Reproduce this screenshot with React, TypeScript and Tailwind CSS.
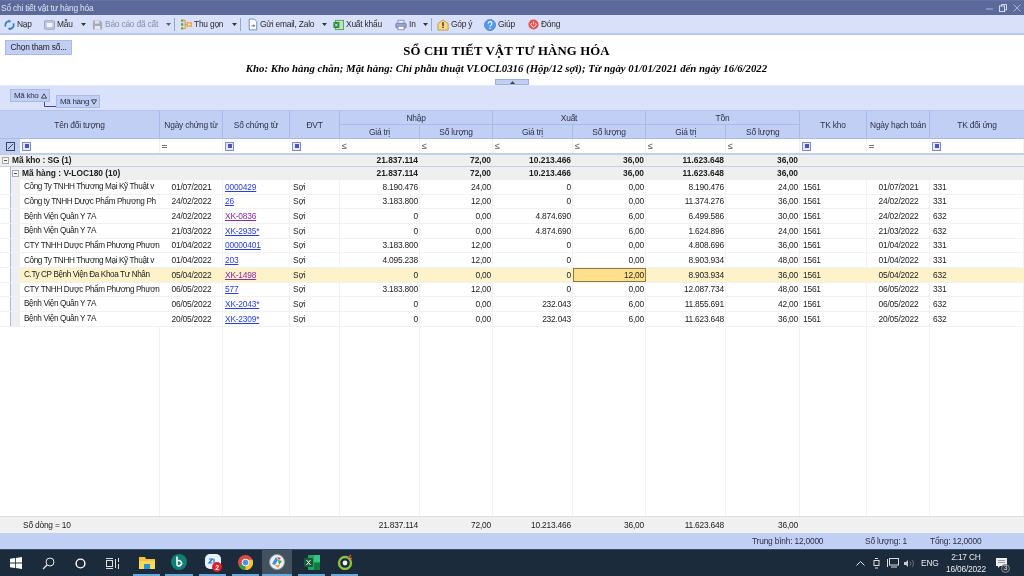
import React from "react";

const GRID = "grid grid-cols-[160px_63px_67px_50px_80px_73px_80px_73px_80px_74px_67px_63px_94px]";

type Row = { n: string; d: string; s: string; v: boolean; a: string[]; tk: string; dh: string; du: string; sel?: boolean };

const rows: Row[] = [
  { n: "Công Ty TNHH Thương Mại Kỹ Thuật v", d: "01/07/2021", s: "0000429", v: false, a: ["8.190.476", "24,00", "0", "0,00", "8.190.476", "24,00"], tk: "1561", dh: "01/07/2021", du: "331" },
  { n: "Công ty TNHH Dược Phẩm Phương Ph", d: "24/02/2022", s: "26", v: false, a: ["3.183.800", "12,00", "0", "0,00", "11.374.276", "36,00"], tk: "1561", dh: "24/02/2022", du: "331" },
  { n: "Bệnh Viện Quân Y 7A", d: "24/02/2022", s: "XK-0836", v: true, a: ["0", "0,00", "4.874.690", "6,00", "6.499.586", "30,00"], tk: "1561", dh: "24/02/2022", du: "632" },
  { n: "Bệnh Viện Quân Y 7A", d: "21/03/2022", s: "XK-2935*", v: false, a: ["0", "0,00", "4.874.690", "6,00", "1.624.896", "24,00"], tk: "1561", dh: "21/03/2022", du: "632" },
  { n: "CTY TNHH Dược Phẩm Phương Phươn", d: "01/04/2022", s: "00000401", v: false, a: ["3.183.800", "12,00", "0", "0,00", "4.808.696", "36,00"], tk: "1561", dh: "01/04/2022", du: "331" },
  { n: "Công Ty TNHH Thương Mại Kỹ Thuật v", d: "01/04/2022", s: "203", v: false, a: ["4.095.238", "12,00", "0", "0,00", "8.903.934", "48,00"], tk: "1561", dh: "01/04/2022", du: "331" },
  { n: "C.Ty CP Bệnh Viện Đa Khoa Tư Nhân", d: "05/04/2022", s: "XK-1498", v: true, a: ["0", "0,00", "0", "12,00", "8.903.934", "36,00"], tk: "1561", dh: "05/04/2022", du: "632", sel: true },
  { n: "CTY TNHH Dược Phẩm Phương Phươn", d: "06/05/2022", s: "577", v: false, a: ["3.183.800", "12,00", "0", "0,00", "12.087.734", "48,00"], tk: "1561", dh: "06/05/2022", du: "331" },
  { n: "Bệnh Viện Quân Y 7A", d: "06/05/2022", s: "XK-2043*", v: false, a: ["0", "0,00", "232.043", "6,00", "11.855.691", "42,00"], tk: "1561", dh: "06/05/2022", du: "632" },
  { n: "Bệnh Viện Quân Y 7A", d: "20/05/2022", s: "XK-2309*", v: false, a: ["0", "0,00", "232.043", "6,00", "11.623.648", "36,00"], tk: "1561", dh: "20/05/2022", du: "632" },
];

const totals = ["21.837.114", "72,00", "10.213.466", "36,00", "11.623.648", "36,00"];

const Caret = ({ dim }: { dim?: boolean }) => (
  <svg width="5" height="4" viewBox="0 0 5 4" className="ml-auto mr-[1px]"><path d="M0 0h5L2.5 3z" fill={dim ? "#5a5f78" : "#333"} /></svg>
);
const Sep = () => <div className="w-px h-[13px] bg-[#8fa6d8] shrink-0" />;

const NapIcon = () => (
  <svg width="11" height="12" viewBox="0 0 13 13" fill="none"><path d="M2 8.5A4.8 4.8 0 0 1 6 1.8" stroke="#2f7fd8" strokeWidth="2" /><path d="M11 4.5A4.8 4.8 0 0 1 7 11.2" stroke="#2f7fd8" strokeWidth="2" /><path d="M5.5 0v4l3-2zM7.5 9v4l-3-2z" fill="#2f7fd8" /></svg>
);
const MauIcon = () => (
  <svg width="11" height="12" viewBox="0 0 13 13"><rect x=".5" y="1.5" width="12" height="10" rx="1.5" fill="#c9d3ef" stroke="#8f97b8" /><rect x="2.5" y="3.5" width="8" height="6" fill="#f4f6fc" stroke="#b5bcd4" /></svg>
);
const SaveIcon = () => (
  <svg width="11" height="12" viewBox="0 0 12 12"><path d="M1 1h8l2 2v8H1z" fill="#a5a9b5" /><rect x="3" y="1.5" width="5" height="3" fill="#dfe2ea" /><rect x="3" y="7" width="6" height="4" fill="#e6e8ee" /></svg>
);
const ThuIcon = () => (
  <svg width="11" height="13" viewBox="0 0 12 13"><rect x="0" y="1" width="2.5" height="2.5" fill="#6bae2f" /><rect x="0" y="5" width="2.5" height="3" fill="#6bae2f" /><rect x="0" y="9.5" width="2.5" height="2.5" fill="#6bae2f" /><path d="M2.5 2h2v9h-2M4.5 6.5h2" stroke="#e08a2a" fill="none" /><rect x="6" y="4" width="6" height="5" fill="#f0a040" /><rect x="7.5" y="5.5" width="3" height="2" fill="#fff3d8" /></svg>
);
const MailIcon = () => (
  <svg width="10" height="13" viewBox="0 0 12 14"><path d="M1.5.5h6l3 3v10h-9z" fill="#fff" stroke="#5b78b8" /><path d="M4 8.5h4M6.5 7l1.5 1.5L6.5 10" stroke="#3f5fa8" fill="none" /></svg>
);
const ExcelIcon = () => (
  <svg width="11" height="12" viewBox="0 0 13 13"><rect x="3" y="1" width="9.5" height="11" fill="#bfe2bd" stroke="#4d9d4a" /><rect x="0.5" y="3" width="7" height="7" fill="#1f8a3d" /><path d="M2.3 4.8l3.2 3.4M5.5 4.8L2.3 8.2" stroke="#fff" /></svg>
);
const PrintIcon = () => (
  <svg width="12" height="12" viewBox="0 0 14 13"><rect x="3.5" y="1" width="7" height="4" fill="#eef1fa" stroke="#7c8bb5" /><rect x="1" y="4.5" width="12" height="5.5" rx="1" fill="#98a7cf" stroke="#7180ad" /><rect x="3.5" y="8" width="7" height="4" fill="#fff" stroke="#7c8bb5" /></svg>
);
const GopIcon = () => (
  <svg width="12" height="12" viewBox="0 0 13 13"><path d="M1 5l5.5-4L12 5v7H1z" fill="#f6d98a" stroke="#b89a45" /><rect x="5.6" y="3.5" width="1.8" height="4" fill="#5a4412" /><rect x="5.6" y="8.3" width="1.8" height="1.4" fill="#5a4412" /></svg>
);
const HelpIcon = () => (
  <svg width="12" height="12" viewBox="0 0 13 13"><circle cx="6.5" cy="6.5" r="6" fill="#4f9be8" stroke="#6a86c8" /><path d="M4.6 5a2 2 0 1 1 2.8 1.7c-.7.4-.9.7-.9 1.4" stroke="#fff" strokeWidth="1.2" fill="none" /><circle cx="6.5" cy="10" r=".8" fill="#fff" /></svg>
);
const CloseIcon = () => (
  <svg width="11" height="11" viewBox="0 0 13 13"><circle cx="6.5" cy="6.5" r="6" fill="#e8504f" /><path d="M4.3 4.5a3 3 0 1 0 4.4 0" stroke="#fff" fill="none" /><path d="M6.5 3v3.5" stroke="#fff" /></svg>
);
const Square = () => <span className="block w-[9px] h-[9px] border border-[#7f8cc4] bg-[#e4e8fa] p-[1.5px]"><span className="block w-full h-full bg-[#4a55c0]" /></span>;
const Le = () => <span className="text-[9px] leading-none text-[#555]">≤</span>;
const Eq = () => <span className="block w-[5px] h-[3px] border-y border-[#777]" />;
const Minus = () => (
  <svg width="7" height="7" viewBox="0 0 7 7" className="mr-[3px] shrink-0" fill="none"><rect x=".5" y=".5" width="6" height="6" fill="#f6f6f6" stroke="#aaa" /><path d="M2 3.5h3" stroke="#555" /></svg>
);

const Tool = ({ icon, label, dim, caret, cls }: { icon: React.ReactNode; label: string; dim?: boolean; caret?: boolean; cls: string }) => (
  <div className={"flex items-center shrink-0 whitespace-nowrap " + cls}>
    {icon}
    <span className={"ml-[2px] " + (dim ? "text-[#8a8ea4]" : "text-[#2a2a2a]")}>{label}</span>
    {caret && <Caret dim={dim} />}
  </div>
);

const HCell = ({ children, cls }: { children?: React.ReactNode; cls?: string }) => (
  <div className={"flex items-center justify-center pt-[1px] border-r border-[#a9b9ea] text-[#2c3048] " + (cls ?? "")}>{children}</div>
);

const App = () => (
  <div className="w-[1024px] h-[576px] overflow-hidden flex flex-col bg-white text-[8.4px] tracking-[-0.2px] leading-none text-[#222] font-['Liberation_Sans',sans-serif] blur-[0.25px]">
    <div className="h-[15px] shrink-0 bg-[#5b6a9a] border-t border-[#6473a3] flex items-center justify-between pl-[1px] pr-[3px] text-[#dfe4f2]">
      <span>Sổ chi tiết vật tư hàng hóa</span>
      <div className="flex items-center gap-[6px]">
        <svg width="7" height="7" viewBox="0 0 7 7"><path d="M0 4h7" stroke="#aeb7d4" /></svg>
        <svg width="8" height="8" viewBox="0 0 8 8" fill="none"><rect x=".5" y="2" width="5" height="5.5" stroke="#d5daea" /><path d="M2.5 2V.5h5V6H6" stroke="#d5daea" /></svg>
        <svg width="8" height="8" viewBox="0 0 8 8"><path d="M.5.5l7 7M7.5.5l-7 7" stroke="#aeb7d4" /></svg>
      </div>
    </div>
    <div className="h-[20px] shrink-0 pt-[1px] bg-[#d8e0fa] border-b-2 border-[#bac8f0] flex items-center pl-[4px]">
      <Tool icon={<NapIcon />} label="Nạp" cls="w-[40px]" />
      <Tool icon={<MauIcon />} label="Mẫu" caret cls="w-[43px] mr-[5px]" />
      <Tool icon={<SaveIcon />} label="Báo cáo đã cất" dim caret cls="w-[80px] mr-[2px]" />
      <Sep />
      <div className="w-[6px] shrink-0" />
      <Tool icon={<ThuIcon />} label="Thu gọn" caret cls="w-[57px] mr-[2px]" />
      <Sep />
      <div className="w-[7px] shrink-0" />
      <Tool icon={<MailIcon />} label="Gửi email, Zalo" caret cls="w-[80px] mr-[5px]" />
      <Tool icon={<ExcelIcon />} label="Xuất khẩu" cls="w-[62px]" />
      <Tool icon={<PrintIcon />} label="In" caret cls="w-[34px] mr-[2px]" />
      <Sep />
      <div className="w-[5px] shrink-0" />
      <Tool icon={<GopIcon />} label="Góp ý" cls="w-[47px]" />
      <Tool icon={<HelpIcon />} label="Giúp" cls="w-[44px]" />
      <Tool icon={<CloseIcon />} label="Đóng" cls="w-[40px]" />
    </div>
    <div className="h-[50px] shrink-0 relative bg-white flex flex-col items-center pr-[11px] font-['Liberation_Serif',serif] text-black tracking-normal">
      <div className="mt-[9px] text-[12.75px] font-bold leading-[14px] tracking-[0.15px]">SỔ CHI TIẾT VẬT TƯ HÀNG HÓA</div>
      <div className="mt-[4px] text-[10.8px] font-bold italic leading-[12px]">Kho: Kho hàng chẵn; Mặt hàng: Chỉ phẫu thuật VLOCL0316 (Hộp/12 sợi); Từ ngày 01/01/2021 đến ngày 16/6/2022</div>
      <button className="absolute left-[5px] top-[5px] w-[67px] h-[15px] bg-[#c2cff5] border border-[#a9b9ea] text-[8.4px] tracking-[-0.2px] text-[#222] font-['Liberation_Sans',sans-serif] leading-none">Chọn tham số...</button>
      <div className="absolute left-[495px] bottom-0 w-[34px] h-[6px] bg-[#c2cff5] border border-[#9dafe2] flex items-center justify-center">
        <svg width="5" height="3" viewBox="0 0 5 3"><path d="M0 3h5L2.5 0z" fill="#444" /></svg>
      </div>
    </div>
    <div className="h-[26px] shrink-0 relative bg-[#d9e1fb] border-t border-[#e3e9fc] border-b border-b-[#b2c1ee]">
      <div className="absolute left-[10px] top-[3px] w-[40px] h-[13px] bg-[#c2cff5] border border-[#a9b9ea] flex items-center justify-between pl-[3px] pr-[2px] text-[#2c3048] text-[8px] whitespace-nowrap tracking-[-0.3px]">
        <span>Mã kho</span>
        <svg width="6" height="6" viewBox="0 0 7 6" fill="none"><path d="M.5 5.5h6L3.5.5z" stroke="#333" /></svg>
      </div>
      <svg className="absolute left-[44px] top-[16px]" width="13" height="6" viewBox="0 0 13 6" fill="none"><path d="M.5 0v4.5H13" stroke="#4a3fa8" /></svg>
      <div className="absolute left-[56px] top-[9px] w-[44px] h-[13px] bg-[#c2cff5] border border-[#a9b9ea] flex items-center justify-between pl-[3px] pr-[2px] text-[#2c3048] text-[8px] whitespace-nowrap tracking-[-0.3px]">
        <span>Mã hàng</span>
        <svg width="6" height="6" viewBox="0 0 7 6" fill="none"><path d="M.5.5h6L3.5 5.5z" stroke="#333" /></svg>
      </div>
    </div>

    <div className={GRID + " h-[28px] shrink-0 bg-[#c2cff5] border-b border-[#a9b9ea]"}>
      <HCell>Tên đối tượng</HCell>
      <HCell>Ngày chứng từ</HCell>
      <HCell>Số chứng từ</HCell>
      <HCell>ĐVT</HCell>
      {["Nhập", "Xuất", "Tồn"].map((t) => (
        <div key={t} className="col-span-2 grid grid-rows-[14px_1fr]">
          <HCell cls="border-b">{t}</HCell>
          <div className="flex">
            <HCell cls="flex-[80_80_0]">Giá trị</HCell>
            <HCell cls="flex-[73_73_0]">Số lượng</HCell>
          </div>
        </div>
      ))}
      <HCell>TK kho</HCell>
      <HCell>Ngày hạch toán</HCell>
      <HCell cls="border-r-0">TK đối ứng</HCell>
    </div>

    <div className={GRID + " h-[16px] shrink-0 bg-white border-b-2 border-[#c3cfe8]"}>
      <div className="flex items-center border-r border-[#f1f2f6]">
        <div className="w-[20px] h-full bg-[#c2cff5] flex items-center justify-center">
          <svg width="9" height="9" viewBox="0 0 9 9" fill="none"><rect x=".5" y=".5" width="8" height="8" stroke="#3c4468" /><path d="M2 7l5-5" stroke="#3c4468" /></svg>
        </div>
        <div className="ml-[2px]"><Square /></div>
      </div>
      {[<Eq />, <Square />, <Square />, <Le />, <Le />, <Le />, <Le />, <Le />, <Le />, <Square />, <Eq />, <Square />].map((el, i) => (
        <div key={i} className="flex items-center pl-[2px] border-r border-[#f1f2f6]">{el}</div>
      ))}
    </div>

    <div className={GRID + " h-[12px] shrink-0 bg-[#efefef] font-bold tracking-normal text-[#1c1c1c] border-b border-[#c3cfe8]"}>
      <div className="col-span-4 flex items-center pl-[2px] tracking-[-0.1px]">
        <Minus />
        Mã kho : SG (1)
      </div>
      {totals.map((t) => <div key={t + "a"} className="flex items-center justify-end pr-[2px]">{t}</div>)}
    </div>

    <div className="flex-1 min-h-0 flex flex-col">
      <div className="flex-1 min-h-0 relative">
        <div className={GRID + " absolute inset-0"}>
          {Array.from({ length: 13 }).map((_, i) => <div key={i} className="border-r border-[#f1f2f5]" />)}
        </div>
        <div className="relative">
          <div className="flex h-[13px]">
            <div className="w-[10px] shrink-0 bg-white" />
            <div className="flex-1 min-w-0 bg-[#efefef] border-l border-[#a9b9ea] font-bold tracking-normal text-[#1c1c1c] grid grid-cols-[149px_63px_67px_50px_80px_73px_80px_73px_80px_74px_67px_63px_94px]">
              <div className="col-span-4 flex items-center pl-[1px]">
                <Minus />
                Mã hàng : V-LOC180 (10)
              </div>
              {totals.map((t) => <div key={t + "b"} className="flex items-center justify-end pr-[2px]">{t}</div>)}
            </div>
          </div>
          {rows.map((r) => (
            <div key={r.s} className={GRID + " h-[14.67px] border-b border-[#f0f1f4] " + (r.sel ? "bg-[#fdf2c9]" : "")}>
              <div className="flex items-center h-full bg-white">
                <div className="w-[11px] h-full self-stretch border-r border-[#a9b9ea] bg-white shrink-0" />
                <div className="w-[9px] h-full bg-[#efefef] shrink-0" />
                <div className={"flex-1 h-full flex items-center pl-[4px] pt-[1px] overflow-hidden whitespace-nowrap text-[8.2px] tracking-[-0.4px] " + (r.sel ? "bg-[#fdf2c9]" : "")}>{r.n}</div>
              </div>
              <div className="flex items-center justify-center">{r.d}</div>
              <div className={"flex items-center pl-[2px] underline " + (r.v ? "text-[#8a2aa0]" : "text-[#2a3fe0]")}>{r.s}</div>
              <div className="flex items-center pl-[3px]">Sợi</div>
              {r.a.map((v, i) => (
                r.sel && i === 3
                  ? <div key={i} className="flex items-center justify-end pr-[1px] bg-[#fedf8c] border border-[#8a7a4a]">{v}</div>
                  : <div key={i} className="flex items-center justify-end pr-[2px]">{v}</div>
              ))}
              <div className="flex items-center pl-[3px]">{r.tk}</div>
              <div className="flex items-center justify-center">{r.dh}</div>
              <div className="flex items-center pl-[3px]">{r.du}</div>
            </div>
          ))}
        </div>
      </div>
      <div className={GRID + " h-[17px] shrink-0 pt-[1px] bg-[#f0f0f0] border-t border-[#e0e0e0]"}>
        <div className="col-span-4 flex items-center pl-[23px]">Số dòng = 10</div>
        {totals.map((t) => <div key={t + "c"} className="flex items-center justify-end pr-[2px]">{t}</div>)}
      </div>
      <div className="h-[16px] shrink-0 pt-[1px] bg-[#c2cff5] flex items-center text-[#2c3048]">
        <span className="ml-[752px] w-[113px]">Trung bình: 12,0000</span>
        <span className="w-[65px]">Số lượng: 1</span>
        <span>Tổng: 12,0000</span>
      </div>
    </div>

    <div className="h-[27px] shrink-0 bg-[#1c2b3c] border-t border-[#31506e] flex items-stretch text-white">
      <div className="w-[32px] flex items-center justify-center">
        <svg width="12" height="12" viewBox="0 0 12 12" fill="#fff"><path d="M0 1.8L5 1v4.6H0zM5.8.9L12 0v5.6H5.8zM0 6.4h5V11l-5-.8zM5.8 6.4H12V12l-6.2-.9z" /></svg>
      </div>
      <div className="w-[32px] flex items-center justify-center">
        <svg width="13" height="13" viewBox="0 0 13 13" fill="none"><circle cx="8" cy="5" r="4" stroke="#e8e8e8" /><path d="M5 8l-4 4" stroke="#e8e8e8" strokeWidth="1.3" /></svg>
      </div>
      <div className="w-[32px] flex items-center justify-center">
        <svg width="11" height="11" viewBox="0 0 11 11" fill="none"><circle cx="5.5" cy="5.5" r="4.4" stroke="#fff" strokeWidth="1.4" /></svg>
      </div>
      <div className="w-[32px] flex items-center justify-center">
        <svg width="13" height="11" viewBox="0 0 13 11" fill="none" stroke="#ddd"><rect x=".5" y="2.5" width="6" height="6" /><path d="M0 .5h7M0 10.5h7M9.5 1v9M12.5 0v4M12.5 6v5" /></svg>
      </div>
      <div className="w-[27px] ml-[5px] flex items-center justify-center border-b-2 border-[#6aa9dc]">
        <svg width="16" height="13" viewBox="0 0 16 13"><path d="M0 1h6l1 2h9v10H0z" fill="#f5c33b" /><rect x="0" y="5" width="16" height="8" fill="#fbd85c" /><rect x="5" y="8" width="6" height="5" fill="#2e8fd6" /></svg>
      </div>
      <div className="w-[28px] ml-[5px] flex items-center justify-center border-b-2 border-[#6aa9dc]">
        <svg width="16" height="16" viewBox="0 0 16 16"><circle cx="8" cy="8" r="8" fill="#0f7f78" /><path d="M6 2.5v9M6 7a3 2.6 0 1 1 0 4.4" stroke="#fff" strokeWidth="1.6" fill="none" /></svg>
      </div>
      <div className="w-[27px] ml-[6px] flex items-center justify-center border-b-2 border-[#6aa9dc] relative">
        <svg width="16" height="16" viewBox="0 0 16 16"><rect width="16" height="15" rx="5" fill="#e8f2fd" /><path d="M4 5h3.5L4 9h3.5M9 5v4" stroke="#1d6fe0" strokeWidth="1.2" fill="none" /></svg>
        <span className="absolute left-[13px] top-[12px] w-[10px] h-[10px] rounded-full bg-[#e2202a] text-[7px] font-bold flex items-center justify-center">2</span>
      </div>
      <div className="w-[27px] ml-[6px] flex items-center justify-center border-b-2 border-[#6aa9dc]">
        <svg width="15" height="15" viewBox="0 0 16 16"><circle cx="8" cy="8" r="8" fill="#dd4b3e" /><path d="M8 8L1 12A8 8 0 0 0 8 16z" fill="#2f9e4f" /><path d="M8 16A8 8 0 0 0 15.5 5H8z" fill="#f6c531" /><circle cx="8" cy="8" r="3.6" fill="#4a8fe8" stroke="#fff" /></svg>
      </div>
      <div className="w-[30px] ml-[3px] flex items-center justify-center bg-[#43525f] border-b-2 border-[#6aa9dc]">
        <svg width="16" height="16" viewBox="0 0 16 16"><circle cx="8" cy="8" r="7.5" fill="#f0f0f0" stroke="#8b9aa5" /><path d="M3 10l4-7 2 3-3 5z" fill="#3f8fe0" /><path d="M9 6l4 1-3 4z" fill="#38a860" /><path d="M6 11h5l-2 3z" fill="#f09a2f" /><path d="M8 3l4 1-2 2z" fill="#d8402f" /></svg>
      </div>
      <div className="w-[27px] ml-[6px] flex items-center justify-center border-b-2 border-[#6aa9dc]">
        <svg width="16" height="15" viewBox="0 0 16 15"><rect x="4" y="0" width="12" height="15" rx="1" fill="#21a366" /><rect x="10" y="0" width="6" height="7.5" fill="#33c481" /><rect x="10" y="7.5" width="6" height="7.5" fill="#107c41" /><rect x="0" y="3" width="9" height="9" rx="1" fill="#185c37" /><path d="M2.5 5l4 5M6.5 5l-4 5" stroke="#fff" /></svg>
      </div>
      <div className="w-[27px] ml-[6px] flex items-center justify-center border-b-2 border-[#6aa9dc]">
        <svg width="16" height="16" viewBox="0 0 16 16" fill="none"><circle cx="8" cy="9" r="6" stroke="#8cc43c" strokeWidth="2.4" /><circle cx="8" cy="9" r="2.4" fill="#f2f2f2" /><path d="M11 4l3-3M13 5l2-1" stroke="#e2553a" strokeWidth="1.4" /></svg>
      </div>
      <div className="flex-1" />
      <div className="flex items-center text-[#e8e8e8]">
        <svg width="9" height="6" viewBox="0 0 9 6" fill="none"><path d="M.5 5.5l4-4 4 4" stroke="#e8e8e8" /></svg>
        <svg width="8" height="11" viewBox="0 0 8 11" fill="none" stroke="#ddd" className="ml-[8px]"><rect x="1" y="2.5" width="5" height="5" /><path d="M2 .5h3M2 10h3" /></svg>
        <svg width="12" height="10" viewBox="0 0 12 10" fill="none" stroke="#ddd" className="ml-[6px]"><rect x="2.5" y=".5" width="9" height="6.5" /><path d="M.5 1v8M4 9h6" /></svg>
        <svg width="10" height="9" viewBox="0 0 10 9" fill="none" className="ml-[5px]"><path d="M0 3h2l2-2v7L2 6H0z" fill="#ccc" /><path d="M6 2.5a3 3 0 0 1 0 4M8 1a5 5 0 0 1 0 7" stroke="#777" /></svg>
        <span className="ml-[7px] w-[18px]">ENG</span>
        <div className="ml-[5px] w-[44px] flex flex-col items-center gap-[4px]">
          <span>2:17 CH</span>
          <span>16/06/2022</span>
        </div>
        <div className="ml-[8px] mr-[17px] relative">
          <svg width="11" height="11" viewBox="0 0 11 11"><path d="M0 0h11v8H4L2 10V8H0z" fill="#eee" /><path d="M2 2.5h7M2 4.5h7" stroke="#999" /></svg>
          <span className="absolute left-[5px] top-[6px] w-[9px] h-[9px] rounded-full bg-[#2c3a48] border border-[#888] text-[6.5px] flex items-center justify-center">3</span>
        </div>
      </div>
    </div>
  </div>
);

export default App;
